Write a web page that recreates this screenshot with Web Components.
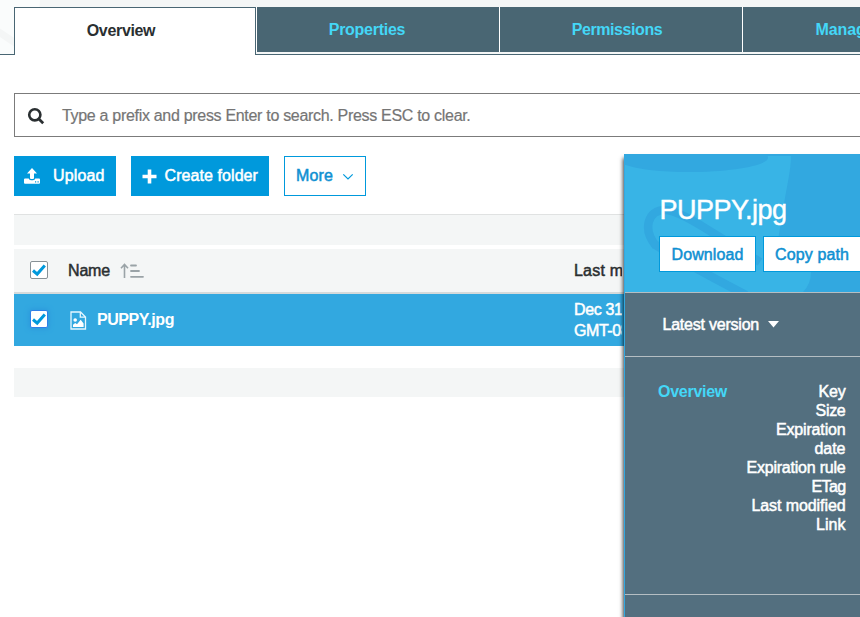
<!DOCTYPE html>
<html lang="en">
<head>
<meta charset="utf-8">
<title>Bucket overview</title>
<style>
html,body{margin:0;height:100%;overflow:hidden;background:#fff}
body{font:16px/20px "Liberation Sans",Arial,sans-serif;color:#2a2f31}
</style>
</head>
<body>
<console-page></console-page>
<script>
const define=(name,html,setup)=>customElements.define(name,class extends HTMLElement{
  connectedCallback(){
    if(this.shadowRoot)return;
    this.attachShadow({mode:"open"}).innerHTML=html;
    if(setup)setup(this,this.shadowRoot);
  }
});

/* Single line of text tracked to an exact advance width. */
define("fit-text",`<style>
:host{display:block;white-space:nowrap;flex:none}
:host([medium]){-webkit-text-stroke:.5px currentColor}
:host([bold]){font-weight:700}
span{display:inline-block}
</style><span><slot></slot></span>`,(el,root)=>{
  const w=+el.getAttribute("width"),s=root.querySelector("span"),n=el.textContent.length;
  const natural=s.getBoundingClientRect().width;
  s.style.letterSpacing=((w-natural)/n).toFixed(3)+"px";
});

define("nav-tab",`<style>
:host{display:flex;box-sizing:border-box;width:242px;height:45px;justify-content:center;align-items:center;background:#496673;color:#44d7f7;flex:none;margin-left:1px}
:host([active]){height:48px;margin:0;border:1px solid #496673;border-bottom:0;background:#fff;color:#2a2f31}
</style><slot></slot>`);

define("tab-bar",`<style>
:host{display:flex;position:relative;box-sizing:border-box;height:55px;padding:7px 0 0 14px;background:linear-gradient(#496673,#496673) 0 54px/100% 1px no-repeat,#f4f6f6;overflow:hidden}
svg{position:absolute;left:0;top:0}
div{display:flex;position:relative;align-items:flex-start}
.rest{background:#fff;height:45px}
.t1{padding:0 28px 1px 0}.t2{padding-right:22px}.t3{padding-right:8px}
</style>
<svg width="42" height="54"><path d="M0 0H40L36 54H0Z" fill="#fafcfc"/><path d="M-4 30L16 43.5" stroke="#f4f6f6" stroke-width="7"/></svg>
<div><nav-tab active class="t1"><fit-text bold width="68.5">Overview</fit-text></nav-tab>
<div class="rest">
<nav-tab class="t2"><fit-text bold width="76.5">Properties</fit-text></nav-tab>
<nav-tab class="t3"><fit-text bold width="90.5">Permissions</fit-text></nav-tab>
<nav-tab><fit-text bold width="97">Management</fit-text></nav-tab>
</div></div>`);

define("search-box",`<style>
:host{display:flex;align-items:center;box-sizing:border-box;height:44px;margin:38px -10px 0 14px;border:1px solid #7b7b7b;color:#757575;background:#fff;padding-left:12px}
svg{margin-right:17px;flex:none;margin-top:2px}
fit-text{margin-top:2px;-webkit-text-stroke:.2px #757575}
</style><svg width="18" height="18" viewBox="0 0 18 18"><circle cx="7.8" cy="7.8" r="5.6" fill="none" stroke="#2a2f31" stroke-width="2.6"/><path d="M11.6 11.8L16.2 16.2" stroke="#2a2f31" stroke-width="2.8"/></svg><fit-text width="408.5">Type a prefix and press Enter to search. Press ESC to clear.</fit-text>`);

define("action-button",`<style>
:host{display:flex;align-items:center;box-sizing:border-box;height:40px;background:#0099dc;color:#fff;border:1px solid #0099dc;flex:none}
:host([outline]){background:#fff;color:#0e90d2}
</style><slot></slot>`);

define("tool-bar",`<style>
:host{display:flex;gap:15px;padding:19px 0 0 14px}
svg{flex:none}
.up{width:102px;padding-left:9px}.up svg{margin-right:13px}
.new{width:138px;padding-left:10px}.new svg{margin-right:7.5px}
.more{width:82px;padding-left:11px}.more svg{margin:1px 0 0 9px}
</style>
<action-button class="up"><svg width="16" height="16" viewBox="0 0 16 16" fill="#fff"><path d="M8 0L13 5.4H10V10Q10 10.9 9 10.9H7Q6 10.9 6 10V5.4H3Z"/><path d="M1 10.6H4.7Q5.2 12.2 7 12.2H9Q10.8 12.2 11.3 10.6H15Q16 10.6 16 11.6V14.8Q16 15.8 15 15.8H1Q0 15.8 0 14.8V11.6Q0 10.6 1 10.6Z"/><path d="M11 13.3h1.2v1.2H11zM13.5 13.3h1.2v1.2h-1.2z" fill="#0099dc"/></svg><fit-text medium width="51.5">Upload</fit-text></action-button>
<action-button class="new"><svg width="15" height="15" viewBox="0 0 15 15"><path d="M.5 7.5H14.5M7.5 .5V14.5" stroke="#fff" stroke-width="3.6"/></svg><fit-text medium width="93.5">Create folder</fit-text></action-button>
<action-button class="more" outline><fit-text medium width="37">More</fit-text><svg width="12" height="8" viewBox="0 0 12 8"><path d="M1.3 1.3L6 6L10.7 1.3" fill="none" stroke="#0099dc" stroke-width="1.2"/></svg></action-button>`);

define("check-box",`<style>
:host{display:block;box-sizing:border-box;width:18px;height:18px;border:1px solid #879196;border-radius:2px;background:#fff;flex:none}
:host([focused]){border-color:#2f80e8;box-shadow:0 0 5px 1px #2c98dc}
svg{display:block}
</style><svg width="16" height="16" viewBox="0 0 16 16"><path d="M2 8.5L6.2 12.1L13.8 3.6" fill="none" stroke="#0099dc" stroke-width="3"/></svg>`);

define("object-table",`<style>
:host{display:block;padding:18px 0 0 14px}
.bar{height:30px;background:#f4f6f6;border-top:1px solid #e0e2e2}
.row{display:grid;grid-template-columns:560px 48px;align-items:center}
.head{height:43px;margin-top:4px;background:#f4f6f6;border-bottom:2px solid #d5dadb}
.item{height:52px;background:#32a8e0;color:#fff}
.foot{height:29px;background:#f4f6f6;margin-top:22px}
.name{display:flex;align-items:center;padding-left:16px}
check-box{margin-right:20px}
.head check-box{margin-top:-1px}
.sort{margin-left:10px}
.file{margin:1px 10px 0 2px}
.item check-box{margin-top:-2px}
.date{line-height:21px;overflow:hidden;margin-top:-1px}
.clip{overflow:hidden}
</style>
<div class="bar"></div>
<div class="row head"><div class="name"><check-box></check-box><fit-text medium width="42">Name</fit-text>
<svg class="sort" width="24" height="16" viewBox="0 0 24 16" fill="none" stroke="#9aa3a7"><path d="M4.5 15V2M1 5.3L4.5 1.5L8 5.3" stroke-width="1.6"/><path d="M11 2.5H16M11 8H19M11 13.8H23" stroke-width="1.8" stroke-linecap="round"/></svg></div><div class="clip"><fit-text medium width="98">Last modified</fit-text></div></div>
<div class="row item"><div class="name"><check-box focused></check-box>
<svg class="file" width="17" height="19" viewBox="0 0 17 19"><path d="M1 1H10.5L15.5 6V18H1ZM10.3 1V6.2H15.5" fill="none" stroke="#e6f7ff" stroke-width="1.3"/><circle cx="5.2" cy="9" r="1.8" fill="#fff"/><path d="M3 16V13.8L5.2 12L7 13.2L10.7 8.8L13.6 12.5V16Z" fill="#fff"/></svg>
<fit-text bold width="77">PUPPY.jpg</fit-text></div><div class="date"><fit-text medium width="91">Dec 31, 1969</fit-text><fit-text medium width="72">GMT-0800</fit-text></div></div>
<div class="foot"></div>`);

define("detail-panel",`<style>
:host{display:flex;flex-direction:column;position:absolute;z-index:2;left:624px;top:154px;width:236px;height:463px;box-sizing:border-box;border-left:1px solid #32a8e0;background:#536f7f;color:#fff;box-shadow:-1px 4px 4px rgba(0,0,0,.75)}
header{position:relative;height:138px;background:#32a8e0;border-bottom:1px solid #b5bec3;overflow:hidden;box-sizing:content-box}
.bucket{position:absolute;left:0;top:0}
h1{position:relative;font-size:27px;line-height:34px;font-weight:400;margin:39px 0 9px 34.5px;-webkit-text-stroke:.4px #fff}
.actions{position:relative;display:flex;gap:7px;padding-left:34px}
action-button{height:36px;padding:2px 0 0 11.5px}
.dl{width:97px}.cp{width:99px;padding-left:11px}
.version{display:flex;align-items:center;height:63px;padding-left:37.5px;border-bottom:1px solid #b5bec3}
.version svg{margin-left:9px}
.info{display:flex;justify-content:space-between;height:212px;padding:25px 14.5px 0 33px;border-bottom:1px solid #b5bec3;line-height:19px}
.info>fit-text{color:#44d7f7}
.keys{display:flex;flex-direction:column;align-items:flex-end}
</style>
<header>
<svg class="bucket" width="235" height="138" viewBox="625 154 235 138"><path d="M625 156H791C791 170 786 190 784 204L778 240L780 268L811 272Q811 285 801 294H625Z" fill="#38b4e6"/><path d="M623 164Q645 172 688 172C733 172 768 165 768 158Q768 154 763 150H623Z" fill="#32a8e0"/><path d="M656 246C642 229 648 210 665 210Q676 210 705 228L760 262M654 244Q690 266 746 295" fill="none" stroke="#32a8e0" stroke-width="8.5"/></svg>
<h1><fit-text width="127">PUPPY.jpg</fit-text></h1>
<div class="actions"><action-button class="dl" outline><fit-text medium width="72">Download</fit-text></action-button><action-button class="cp" outline><fit-text medium width="74">Copy path</fit-text></action-button></div>
</header>
<div class="version"><fit-text medium width="96.5">Latest version</fit-text><svg width="11" height="7"><path d="M0 0H11L5.5 6.5Z" fill="#fff"/></svg></div>
<div class="info"><fit-text bold width="69">Overview</fit-text><div class="keys"><fit-text medium width="27">Key</fit-text><fit-text medium width="30">Size</fit-text><fit-text medium width="69.5">Expiration</fit-text><fit-text medium width="31">date</fit-text><fit-text medium width="99">Expiration rule</fit-text><fit-text medium width="34">ETag</fit-text><fit-text medium width="94">Last modified</fit-text><fit-text medium width="29.5">Link</fit-text></div></div>`);

define("console-page",`<style>
:host{display:block;position:relative;width:860px;height:617px;overflow:hidden;background:#fff}
</style>
<tab-bar></tab-bar>
<search-box></search-box>
<tool-bar></tool-bar>
<object-table></object-table>
<detail-panel></detail-panel>`);
</script>
</body>
</html>
